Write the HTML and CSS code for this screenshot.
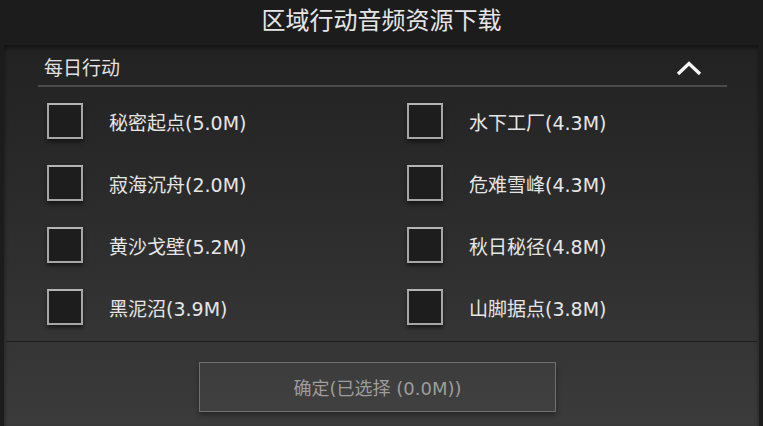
FILE: index.html
```html
<!DOCTYPE html>
<html lang="zh">
<head>
  <meta charset="UTF-8">
  <title>区域行动音频资源下载</title>
  <link rel="stylesheet" href="styles.css">
</head>
<body>
  <h1 class="title">区域行动音频资源下载</h1>

  <div class="panel">
    <div class="section-head">
      <span>每日行动</span>
      <svg class="chevron" width="26" height="14" viewBox="0 0 26 14">
        <polyline points="2,13 13,2.5 24,13" fill="none" stroke="#f4f4f4" stroke-width="3.4" stroke-linejoin="miter"/>
      </svg>
    </div>

    <div class="list">
      <label class="item"><span class="box"></span>秘密起点(5.0M)</label>
      <label class="item"><span class="box"></span>水下工厂(4.3M)</label>
      <label class="item"><span class="box"></span>寂海沉舟(2.0M)</label>
      <label class="item"><span class="box"></span>危难雪峰(4.3M)</label>
      <label class="item"><span class="box"></span>黄沙戈壁(5.2M)</label>
      <label class="item"><span class="box"></span>秋日秘径(4.8M)</label>
      <label class="item"><span class="box"></span>黑泥沼(3.9M)</label>
      <label class="item"><span class="box"></span>山脚据点(3.8M)</label>
    </div>

    <div class="footer">
      <button class="confirm">确定(已选择 (0.0M))</button>
    </div>
  </div>
</body>
</html>
```

FILE: styles.css
```css
body {
  margin: 0;
  width: 763px;
  height: 426px;
  overflow: hidden;
  background: #1c1c1c;
  font-family: "DejaVu Sans", "Noto Sans CJK SC", sans-serif;
  color: #e4e4e4;
}

.title {
  margin: 0;
  height: 45px;
  line-height: 42px;
  text-align: center;
  font-size: 24px;
  font-weight: normal;
  color: #e6e6e6;
}

.panel {
  margin: 0 4px;
  height: 381px;
  background: linear-gradient(#222222, #2c2c2c 45%, #3b3b3b);
  box-shadow: inset 0 3px 4px rgba(0, 0, 0, 0.45);
}

.section-head {
  margin: 0 32px 0 34px;
  height: 42px;
  padding: 2px 0 0 6px;
  box-sizing: border-box;
  display: flex;
  justify-content: space-between;
  align-items: center;
  border-bottom: 2px solid #4b4b4b;
  font-size: 19px;
  color: #e2e2e2;
}

.chevron {
  margin-right: 25px;
  margin-top: 4px;
}

.list {
  display: grid;
  grid-template-columns: 360px 360px;
  row-gap: 26px;
  margin: 0 2px;
  padding: 16px 0 16px 41px;
  border-bottom: 1px solid #1e1e1e;
}

.item {
  display: flex;
  align-items: center;
  gap: 26px;
  font-size: 19px;
  color: #e6e6e6;
}

.box {
  width: 36px;
  height: 36px;
  box-sizing: border-box;
  border: 2px solid #a6a6a6;
  border-top-color: #b4b4b4;
  background: #1d1d1d;
  box-shadow: 0 3px 4px rgba(0, 0, 0, 0.5);
}

.footer {
  padding: 20px 0 0 195px;
}

.confirm {
  width: 357px;
  height: 50px;
  border: 1px solid #707070;
  background: rgba(255, 255, 255, 0.03);
  box-shadow: 0 3px 5px rgba(0, 0, 0, 0.35);
  font-family: inherit;
  font-size: 18px;
  color: #9d9d9d;
}
```
